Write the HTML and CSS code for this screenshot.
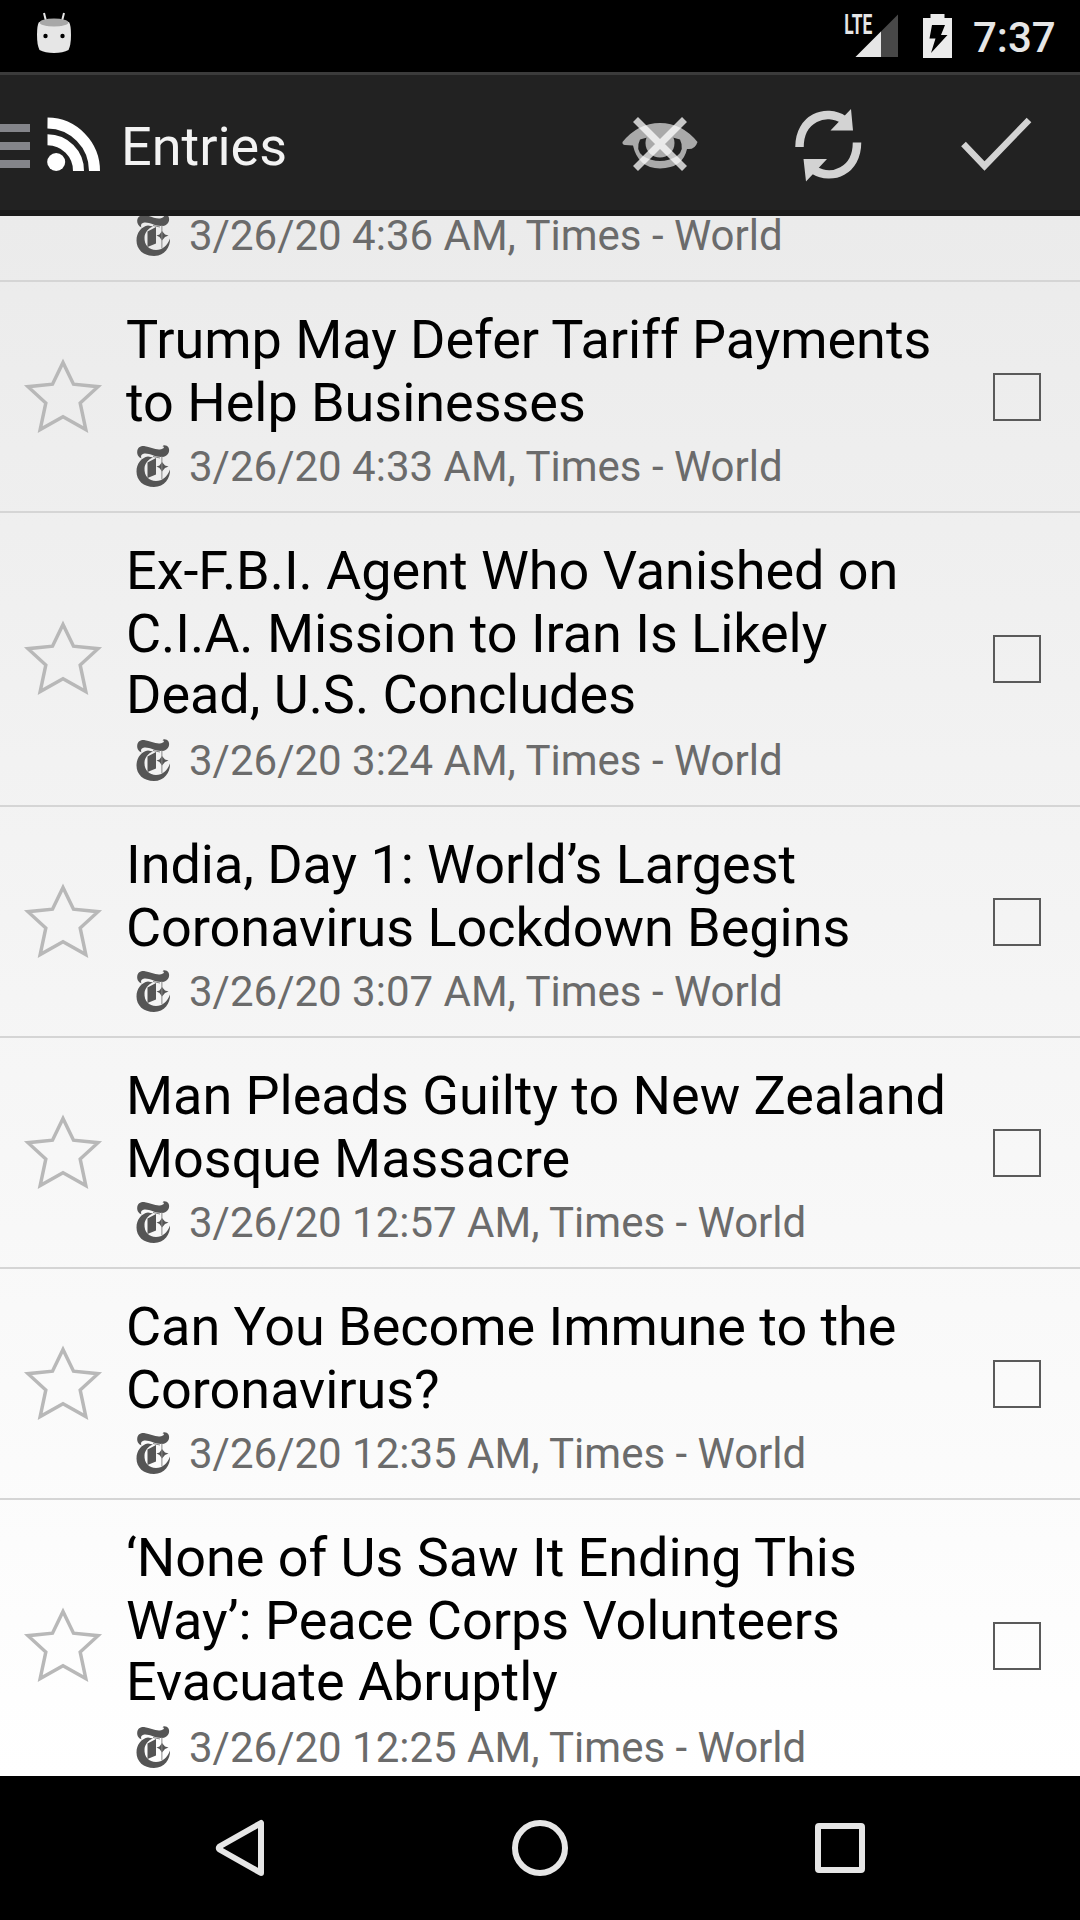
FILE: index.html
```html
<!DOCTYPE html>
<html lang="en">
<head>
<meta charset="utf-8">
<title>Entries</title>
<link rel="stylesheet" href="styles.css">
</head>
<body>
<svg class="defs" width="0" height="0">
  <symbol id="star" viewBox="0 0 84 84">
    <path d="M42 7.500 L52.500 29.200 L77 31.700 L59.200 48 L64.800 74.500 L42 61.700 L19.200 74.500 L24.800 48 L7 31.700 L31.500 29.200 Z" fill="none" stroke="#b8b8b8" stroke-width="3.500"/>
  </symbol>
  <symbol id="feed" viewBox="0 0 36 44">
    <g fill="#555">
      <path d="M5.500 14.500 C2 13 1 10 1.200 7.500 C1.500 3.500 5 1.700 9 2.200 C14 2.700 20 6.500 25 5.300 C28 4.500 29 2.800 26.500 2.200 C27.500 0.500 31 1 32.500 3.500 C34.500 7.500 31.500 12.500 27 13 C20 14 13 8.500 7.500 9.800 C5 10.500 4.500 12.500 5.500 14.500 Z"/>
      <path d="M12 12.500 L17 13.500 C12 15.500 9 19.500 8.500 24 C8 32 13 37 20 37 C26.500 37 31 33 34 25.500 C34.500 34 28.500 43 18 43 C7.500 43 0.500 36.500 0.500 27.500 C0.500 19.500 5.500 13.500 12 12.500 Z"/>
      <path d="M11.500 18.500 L20 14 V30.500 L11.500 34 Z"/>
      <path d="M26 18 L29 21.500 L32.500 22.500 L29 24 L26 27.500 L23.500 24 L20.500 22.500 L23.500 21.500 Z"/>
    </g>
    <path d="M17 12.500 L24 14 M25.900 12 V35" fill="none" stroke="#888" stroke-width="1"/>
  </symbol>
</svg>

<header class="status">
  <svg class="status-robot" width="36" height="44" viewBox="0 0 36 44">
    <path d="M8 2 L10 10 M28 2 L26 10" stroke="#e6e6e6" stroke-width="2"/>
    <path d="M3 11 Q1 14 1 24 Q1 34 3.500 39 Q9 42 18 42 Q27 42 32.500 39 Q35 34 35 24 Q35 14 33 11 Z" fill="#e6e6e6"/>
    <ellipse cx="18" cy="11.500" rx="14.500" ry="4" fill="#a8a8a8"/>
    <circle cx="9.500" cy="25" r="2.200" fill="#000"/><circle cx="26.500" cy="25" r="2.200" fill="#000"/>
  </svg>
  <svg class="status-signal" width="60" height="48" viewBox="-4 0 60 48">
    <path d="M11.500 45 L54 2.500 V45 Z" fill="#484848"/>
    <path d="M11.500 45 L37 19.500 V45 Z" fill="#e6e6e6"/>
    <text class="lte" x="0.300" y="21.800" textLength="28" lengthAdjust="spacingAndGlyphs">LTE</text>
  </svg>
  <svg class="status-battery" width="30" height="44" viewBox="0 0 30 44">
    <path d="M7.500 0 H21.500 V4 H29 V44 H0 V4 H7.500 Z" fill="#ebebeb"/>
    <path d="M9 11 H22 L18 21 H24.500 L8 39 L12.500 24.500 H6.500 Z" fill="#000"/>
  </svg>
  <span class="clock">7:37</span>
</header>

<nav class="bar">
  <div class="drawer"><i></i><i></i><i></i></div>
  <svg class="rss" width="54" height="56" viewBox="0 0 54 56" fill="none" stroke="#fff" stroke-width="11">
    <circle cx="9.200" cy="45" r="9" fill="#fff" stroke="none"/>
    <path d="M0.500 22.800 A31 31 0 0 1 31.500 54 M0.500 6 A47.500 48 0 0 1 47.500 54"/>
  </svg>
  <h1 class="bar-title">Entries</h1>
  <div class="actions">
    <svg width="168" height="135" viewBox="576 75 168 135">
      <path fill="#aaa" fill-rule="evenodd" d="M622.500 142 Q638 123 660 123 Q682 123 697.500 142 Q695 150 687 149 Q683 168 660 168.500 Q638 168 633 145.500 L625 145 Q622 144.500 622.500 142 Z M649 137 L640 139.500 Q635 150 643 156 Q651 161 660 161 Q669 161 677 156 Q685 150 680 139.500 L671 137 Z"/>
      <circle cx="660" cy="143" r="14.500" fill="#aaa"/>
      <path d="M635.500 119.500 L684.500 168.500 M684.500 119.500 L635.500 168.500" stroke="#fff" stroke-opacity="0.750" stroke-width="7"/>
    </svg>
    <svg width="168" height="135" viewBox="744 75 168 135">
      <path d="M799.500 147 C799.500 118 826 108 844 120 M857 142.500 C857 171 832 181 814 170" fill="none" stroke="#d3d3d3" stroke-width="8.500"/>
      <path d="M851 109 L853 130.500 H830.500 Z M803.500 159 H827 L806 181.500 Z" fill="#d3d3d3"/>
    </svg>
    <svg width="168" height="135" viewBox="912 75 168 135">
      <path d="M963.500 144 L984.500 166 L1029 120" fill="none" stroke="#d3d3d3" stroke-width="6.500"/>
    </svg>
  </div>
</nav>

<main class="list">
  <article class="entry clipped">
    <div class="body"><p class="meta"><svg class="feed"><use href="#feed"/></svg>3/26/20 4:36 AM, Times - World</p></div>
  </article>
  <article class="entry">
    <svg class="star"><use href="#star"/></svg>
    <div class="body">
      <h2 class="title"><span>Trump May Defer Tariff Payments</span><span>to Help Businesses</span></h2>
      <p class="meta"><svg class="feed"><use href="#feed"/></svg>3/26/20 4:33 AM, Times - World</p>
    </div>
    <div class="check"></div>
  </article>
  <article class="entry">
    <svg class="star"><use href="#star"/></svg>
    <div class="body">
      <h2 class="title"><span>Ex-F.B.I. Agent Who Vanished on</span><span>C.I.A. Mission to Iran Is Likely</span><span>Dead, U.S. Concludes</span></h2>
      <p class="meta"><svg class="feed"><use href="#feed"/></svg>3/26/20 3:24 AM, Times - World</p>
    </div>
    <div class="check"></div>
  </article>
  <article class="entry">
    <svg class="star"><use href="#star"/></svg>
    <div class="body">
      <h2 class="title"><span>India, Day 1: World’s Largest</span><span>Coronavirus Lockdown Begins</span></h2>
      <p class="meta"><svg class="feed"><use href="#feed"/></svg>3/26/20 3:07 AM, Times - World</p>
    </div>
    <div class="check"></div>
  </article>
  <article class="entry">
    <svg class="star"><use href="#star"/></svg>
    <div class="body">
      <h2 class="title"><span>Man Pleads Guilty to New Zealand</span><span>Mosque Massacre</span></h2>
      <p class="meta"><svg class="feed"><use href="#feed"/></svg>3/26/20 12:57 AM, Times - World</p>
    </div>
    <div class="check"></div>
  </article>
  <article class="entry">
    <svg class="star"><use href="#star"/></svg>
    <div class="body">
      <h2 class="title"><span>Can You Become Immune to the</span><span>Coronavirus?</span></h2>
      <p class="meta"><svg class="feed"><use href="#feed"/></svg>3/26/20 12:35 AM, Times - World</p>
    </div>
    <div class="check"></div>
  </article>
  <article class="entry">
    <svg class="star"><use href="#star"/></svg>
    <div class="body">
      <h2 class="title"><span>‘None of Us Saw It Ending This</span><span>Way’: Peace Corps Volunteers</span><span>Evacuate Abruptly</span></h2>
      <p class="meta"><svg class="feed"><use href="#feed"/></svg>3/26/20 12:25 AM, Times - World</p>
    </div>
    <div class="check"></div>
  </article>
</main>

<footer class="navbar">
  <svg width="60" height="60" viewBox="0 0 60 60"><path d="M51 5 V55 L9.500 31.500 Q8 30 9.500 28.500 Z"/></svg>
  <svg width="60" height="60" viewBox="0 0 60 60"><circle cx="30" cy="30" r="25"/></svg>
  <svg width="60" height="60" viewBox="0 0 60 60"><rect x="8" y="8" width="44" height="44" rx="1"/></svg>
</footer>
</body>
</html>
```
FILE: styles.css
```css
* { box-sizing: border-box; margin: 0; padding: 0; }

body {
  width: 1080px;
  height: 1920px;
  overflow: hidden;
  display: flex;
  flex-direction: column;
  background: #000;
  font-family: Roboto, "Liberation Sans", sans-serif;
}

svg { display: block; flex: none; }
.defs { position: absolute; }

/* Status bar */
.status {
  height: 72px;
  flex: none;
  display: flex;
  align-items: flex-start;
  padding: 12px 26px 0 36px;
}
.status-robot { margin-top: -1px; }
.status-signal { margin-left: auto; }
.status-battery { margin: 2px 20px 0 23px; }
.clock {
  width: 81px;
  margin-top: 1px;
  font-size: 42px;
  line-height: 49px;
  font-weight: 500;
  color: #e6e6e6;
  white-space: nowrap;
}
.lte {
  font-size: 27px;
  font-weight: 700;
  fill: #e6e6e6;
}

/* Action bar */
.bar {
  height: 144px;
  flex: none;
  display: flex;
  align-items: center;
  background: #222;
  border-top: 3px solid #3b3b3b;
  border-bottom: 6px solid #1b1b1b;
}
.drawer {
  width: 30px;
  display: flex;
  flex-direction: column;
  gap: 10px;
  padding-top: 7px;
}
.drawer i { height: 8px; background: #84858a; }
.rss { margin: 4px 0 0 17px; }
.bar-title {
  margin: 8px 0 0 20px;
  font-size: 54px;
  line-height: 63px;
  font-weight: 400;
  color: #f3f3f3;
}
.actions { display: flex; margin-left: auto; }

/* Entry list */
.list {
  height: 1560px;
  flex: none;
  overflow: hidden;
  background: linear-gradient(#ebebeb, #fff);
}
.entry {
  display: flex;
  align-items: center;
  padding: 26px 39px 20px 21px;
  border-bottom: 2px solid #d5d5d5;
}
.clipped {
  height: 66px;
  overflow: hidden;
  align-items: flex-end;
  padding: 0 39px 15px 126px;
}
.clipped .body { margin-bottom: 5px; }
.star { width: 84px; height: 84px; margin: 0 21px 6px 0; }
.body { flex: 1; min-width: 0; }
.title {
  font-size: 54px;
  font-weight: 400;
  line-height: 63px;
  letter-spacing: -0.04px;
  color: #000;
  white-space: nowrap;
}
.title span { display: block; }
.title span:nth-child(3) { margin-top: -2px; padding-bottom: 2px; }
.meta {
  display: flex;
  align-items: center;
  height: 49px;
  margin-top: 8px;
  font-size: 42px;
  line-height: 49px;
  color: #6b6b6b;
  white-space: nowrap;
}
.feed { width: 36px; height: 44px; margin: 0 17px 2px 10px; }
.check {
  flex: none;
  width: 48px;
  height: 48px;
  margin-bottom: 6px;
  border: 2px solid #5a5a5a;
}

/* System navigation */
.navbar {
  height: 144px;
  flex: none;
  display: flex;
  justify-content: space-between;
  align-items: center;
  padding: 0 210px;
}
.navbar svg {
  fill: none;
  stroke: #e6e6e6;
  stroke-width: 6;
  stroke-linejoin: round;
}
```
